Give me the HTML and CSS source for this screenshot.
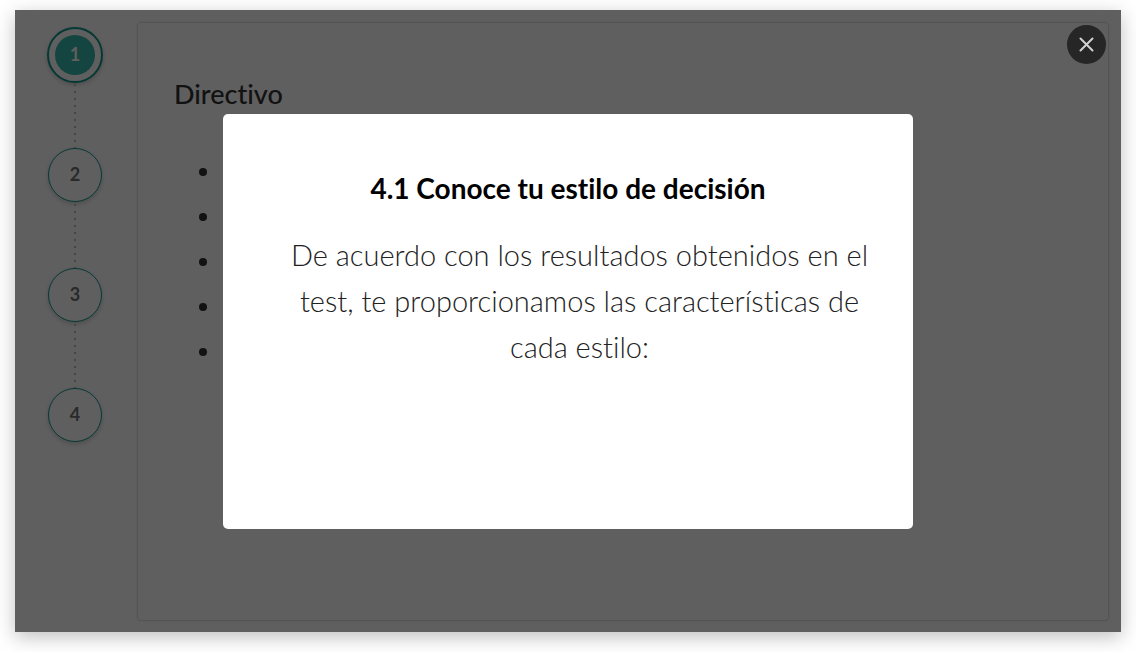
FILE: index.html
```html
<!DOCTYPE html>
<html lang="es">
<head>
<meta charset="utf-8">
<meta name="viewport" content="width=device-width, initial-scale=1">
<title>4.1 Conoce tu estilo de decisión</title>
<link rel="stylesheet" href="styles.css">
</head>
<body>
<main class="stage">
  <nav class="steps">
    <button class="step step-active" type="button"><span class="step-number">1</span></button>
    <span class="connector"></span>
    <button class="step" type="button">2</button>
    <span class="connector"></span>
    <button class="step" type="button">3</button>
    <span class="connector"></span>
    <button class="step" type="button">4</button>
  </nav>
  <section class="panel">
    <h1 class="panel-title">Directivo</h1>
    <ul class="traits">
      <li></li>
      <li></li>
      <li></li>
      <li></li>
      <li></li>
    </ul>
  </section>
  <div class="overlay">
    <div class="modal" role="dialog" aria-labelledby="modal-title">
      <h2 class="modal-title" id="modal-title">4.1 Conoce tu estilo de decisión</h2>
      <p class="modal-text">De acuerdo con los resultados obtenidos en el test, te proporcionamos las características de cada estilo:</p>
    </div>
    <button class="close" type="button" aria-label="Cerrar">
      <svg class="close-icon" viewBox="0 0 17 17" aria-hidden="true"><path d="M2.5 2.5L14.5 14.5M14.5 2.5L2.5 14.5"/></svg>
    </button>
  </div>
</main>
</body>
</html>
```

FILE: styles.css
```css
* {
  box-sizing: border-box;
}

body {
  margin: 0;
  min-height: 100vh;
  padding: 10px 15px 20px;
  display: flex;
  background: #fff;
  font-family: Lato, "Open Sans", sans-serif;
  font-variant-ligatures: none;
}

.stage {
  position: relative;
  flex: 1;
  display: grid;
  grid-template-columns: 120px 1fr;
  column-gap: 2px;
  padding: 12px 12px 11px 0;
  background: #fff;
  box-shadow: 0 5px 18px rgba(0, 0, 0, 0.25);
}

.steps {
  display: flex;
  flex-direction: column;
  align-items: center;
  padding-top: 5px;
}

.step {
  display: grid;
  place-items: center;
  flex: none;
  width: 54px;
  height: 54px;
  padding: 0 0 2px;
  border: 1px solid #109a8c;
  border-radius: 50%;
  background: #fff;
  color: #707070;
  font: 700 18px Lato, sans-serif;
  box-shadow: 0 2px 5px rgba(0, 0, 0, 0.2);
}

.step-active {
  width: 56px;
  height: 56px;
  margin-bottom: -1px;
  padding: 0;
  border-width: 2px;
}

.step-number {
  display: grid;
  place-items: center;
  width: 40px;
  height: 40px;
  padding-bottom: 2px;
  border-radius: 50%;
  background: #36b9ad;
  color: #fff;
}

.connector {
  flex: none;
  width: 2px;
  height: 66px;
  background: linear-gradient(#bbb 2px, transparent 2px) 0 2px / 2px 7px;
}

.panel {
  padding: 51px 36px;
  border: 1px solid #e0e0e0;
  border-radius: 4px;
  box-shadow: 0 0 3px rgba(0, 0, 0, 0.1);
}

.panel-title {
  margin: 0 0 34px;
  color: #303030;
  font-size: 27px;
  font-weight: 500;
  line-height: 40px;
}

.traits {
  margin: 0;
  padding-left: 48px;
  color: #303030;
  font-size: 24px;
  line-height: 45px;
}

.overlay {
  position: absolute;
  inset: 0;
  display: grid;
  place-items: center;
  background: rgba(0, 0, 0, 0.627);
}

.modal {
  width: min(690px, 90%);
  min-height: 415px;
  padding: 54px 36px 54px 59px;
  border-radius: 5px;
  background: #fff;
  text-align: center;
}

.modal-title {
  margin: 0 23px 24px 0;
  color: #000;
  font-size: 28px;
  font-weight: 700;
  line-height: 40px;
}

.modal-text {
  margin: 0;
  color: #222;
  font-size: 29px;
  font-weight: 300;
  line-height: 46px;
}

.close {
  position: absolute;
  top: 15px;
  right: 15px;
  display: grid;
  place-items: center;
  width: 39px;
  height: 39px;
  padding: 0;
  border: 0;
  border-radius: 50%;
  background: #262626;
}

.close-icon {
  width: 17px;
  height: 17px;
  fill: none;
  stroke: #d2d2d2;
  stroke-width: 2;
  stroke-linecap: round;
}
```
